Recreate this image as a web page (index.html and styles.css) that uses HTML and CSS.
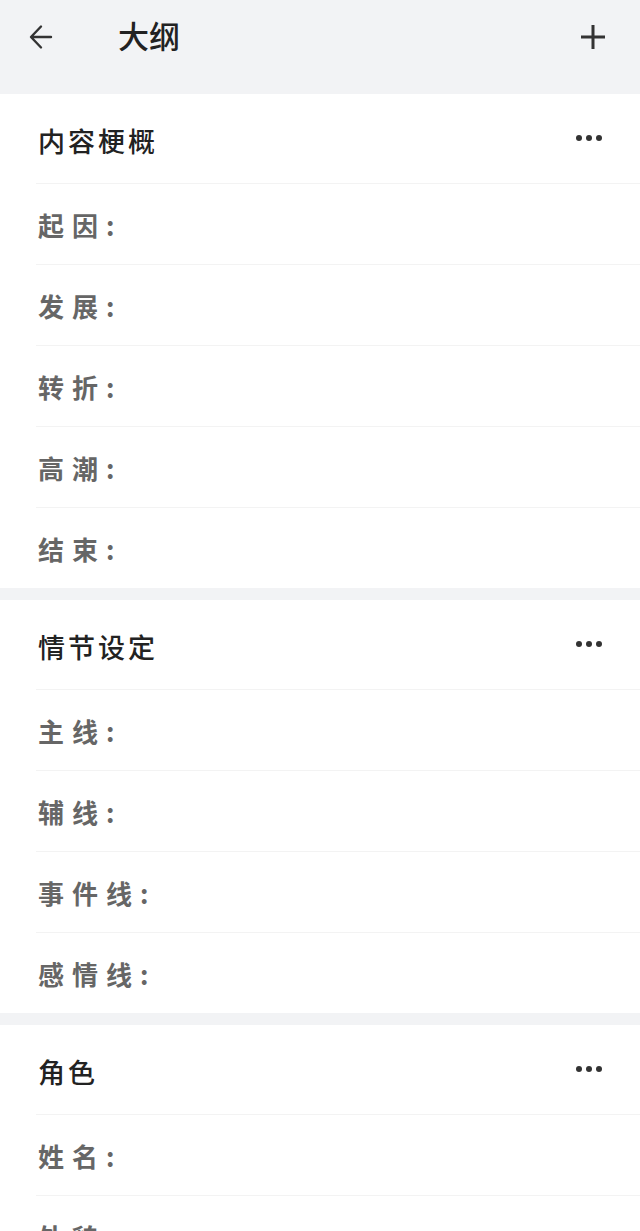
FILE: index.html
```html
<!DOCTYPE html>
<html lang="zh">
<head>
  <meta charset="UTF-8" />
  <title>大纲</title>
  <link rel="stylesheet" href="styles.css">
</head>
<body>
  <header class="topbar">
    <svg class="icon back" viewBox="0 0 24 26" width="24" height="26">
      <path d="M22 13H3M12 2.5L2 13l10 10.5" fill="none" stroke="#333" stroke-width="2.4" stroke-linecap="round" stroke-linejoin="round"/>
    </svg>
    <h1 class="title">大纲</h1>
    <svg class="icon add" viewBox="0 0 24 24" width="24" height="24">
      <path d="M12 0v24M0 12h24" fill="none" stroke="#333" stroke-width="3"/>
    </svg>
  </header>

  <section class="card">
    <div class="card-head">
      <span class="card-title">内容梗概</span>
      <span class="more"><i></i><i></i><i></i></span>
    </div>
    <div class="row">起因:</div>
    <div class="row">发展:</div>
    <div class="row">转折:</div>
    <div class="row">高潮:</div>
    <div class="row">结束:</div>
  </section>

  <section class="card">
    <div class="card-head">
      <span class="card-title">情节设定</span>
      <span class="more"><i></i><i></i><i></i></span>
    </div>
    <div class="row">主线:</div>
    <div class="row">辅线:</div>
    <div class="row">事件线:</div>
    <div class="row">感情线:</div>
  </section>

  <section class="card">
    <div class="card-head">
      <span class="card-title">角色</span>
      <span class="more"><i></i><i></i><i></i></span>
    </div>
    <div class="row">姓名:</div>
    <div class="row">外貌:</div>
  </section>
</body>
</html>
```

FILE: styles.css
```css
body {
  margin: 0;
  background: #f2f3f5;
  font-family: "Noto Sans CJK SC", "Noto Sans", sans-serif;
  width: 640px;
}
.topbar {
  height: 74px;
  display: flex;
  align-items: center;
  padding: 0 35px 0 29px;
  margin-bottom: 20px;
}
.icon {
  display: block;
}
.title {
  margin: 0 0 6px 65px;
  font-size: 31px;
  font-weight: 500;
  color: #222;
  flex: 1;
  line-height: 1;
}
.card {
  background: #fff;
  margin-bottom: 12px;
  padding-left: 36px;
}
.card-head {
  height: 90px;
  display: flex;
  align-items: center;
  justify-content: space-between;
  padding: 0 38px 0 2px;
  border-bottom: 1px solid #f3f3f3;
  box-sizing: border-box;
}
.card-title {
  font-size: 27px;
  font-weight: 500;
  color: #222;
  letter-spacing: 3px;
  margin-top: 3px;
}
.more {
  display: flex;
  gap: 4px;
  margin-top: -2px;
}
.more i {
  width: 6px;
  height: 6px;
  border-radius: 50%;
  background: #333;
}
.row {
  height: 81px;
  box-sizing: border-box;
  display: flex;
  align-items: center;
  padding-left: 2px;
  font-size: 26px;
  font-weight: 700;
  color: #666;
  letter-spacing: 8px;
  border-bottom: 1px solid #f3f3f3;
}
.row:last-child {
  height: 80px;
  border-bottom: none;
}
```
